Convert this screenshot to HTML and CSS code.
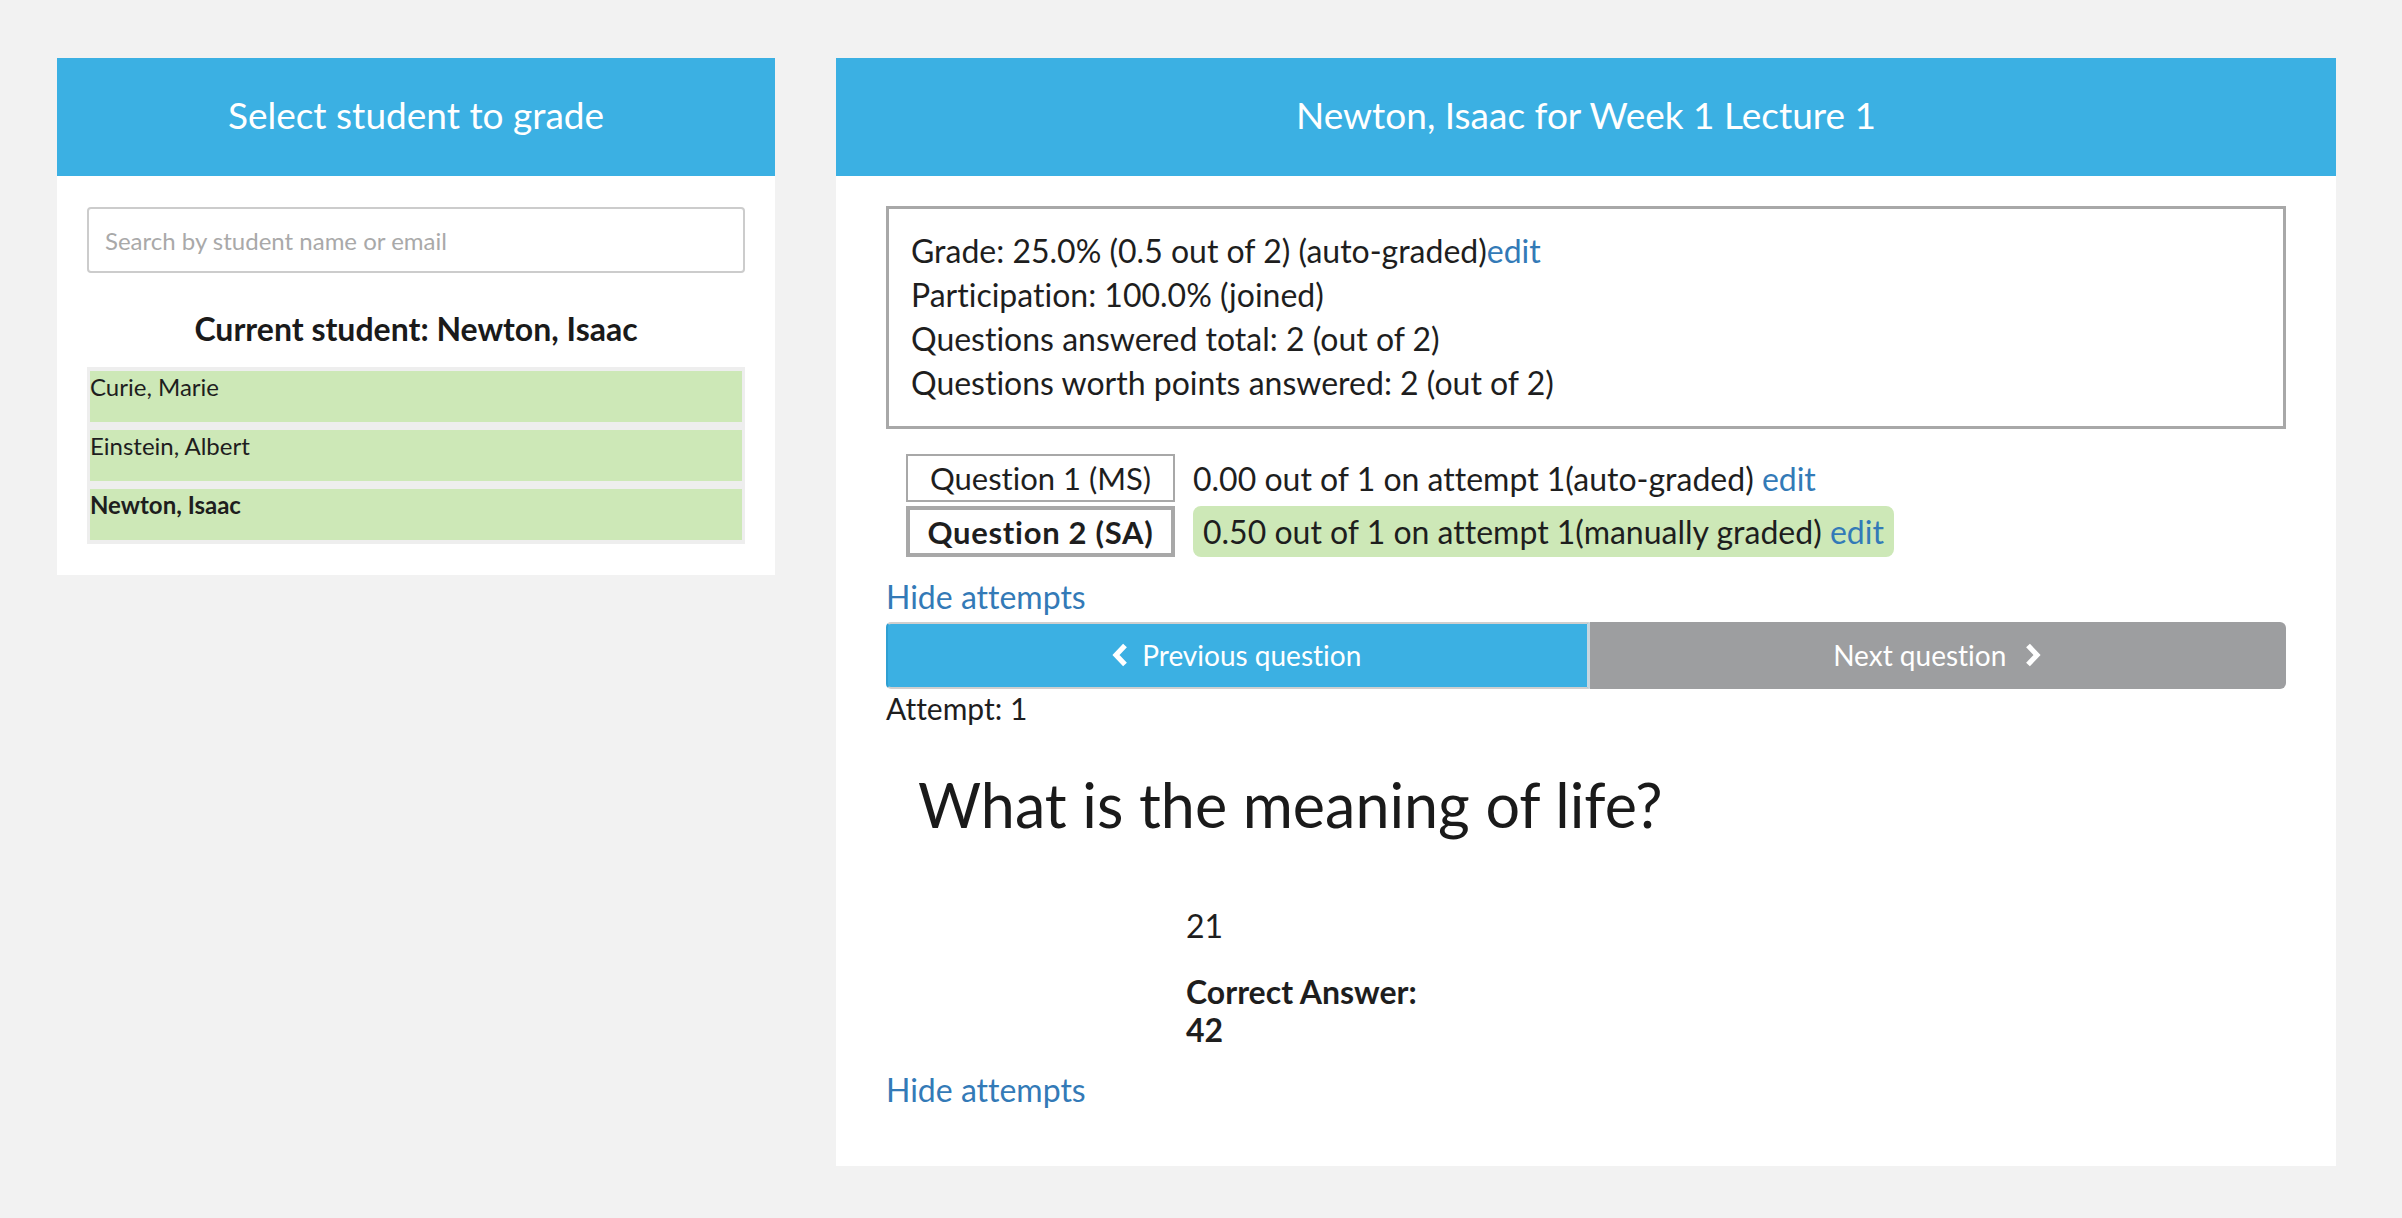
FILE: index.html
```html
<!DOCTYPE html>
<html lang="en">
<head>
<meta charset="utf-8">
<title>Grading</title>
<link rel="stylesheet" href="styles.css">
</head>
<body>
<div class="page">
  <aside class="panel student-panel">
    <div class="panel-header"><h2>Select student to grade</h2></div>
    <div class="panel-body student-body">
      <input class="search" type="text" placeholder="Search by student name or email">
      <h3 class="current">Current student: Newton, Isaac</h3>
      <ul class="student-list">
        <li>Curie, Marie</li>
        <li>Einstein, Albert</li>
        <li class="active">Newton, Isaac</li>
      </ul>
    </div>
  </aside>

  <main class="panel grade-panel">
    <div class="panel-header"><h2>Newton, Isaac for Week 1 Lecture 1</h2></div>
    <div class="panel-body grade-body">
      <div class="summary">
        <div>Grade: 25.0% (0.5 out of 2) (auto-graded)<a href="#">edit</a></div>
        <div>Participation: 100.0% (joined)</div>
        <div>Questions answered total: 2 (out of 2)</div>
        <div>Questions worth points answered: 2 (out of 2)</div>
      </div>

      <div class="questions">
        <div class="qbox">Question 1 (MS)</div>
        <div class="score">0.00 out of 1 on attempt 1(auto-graded)&nbsp;<a href="#">edit</a></div>
        <div class="qbox selected">Question 2 (SA)</div>
        <div class="score graded">0.50 out of 1 on attempt 1(manually graded)&nbsp;<a href="#">edit</a></div>
      </div>

      <a class="hide-link first" href="#">Hide attempts</a>

      <div class="nav">
        <button class="nav-btn prev" type="button">
          <svg class="chev" width="17" height="24" viewBox="0 0 17 24"><polyline points="14,2.5 5,12 14,21.5" fill="none" stroke="#fff" stroke-width="5.2"/></svg>
          <span>Previous question</span>
        </button>
        <button class="nav-btn next" type="button">
          <span>Next question</span>
          <svg class="chev" width="17" height="24" viewBox="0 0 17 24"><polyline points="3,2.5 12,12 3,21.5" fill="none" stroke="#fff" stroke-width="5.2"/></svg>
        </button>
      </div>

      <div class="attempt">Attempt: 1</div>

      <h1 class="question">What is the meaning of life?</h1>

      <div class="answer">
        <div class="given">21</div>
        <div class="correct">Correct Answer:<br>42</div>
      </div>

      <a class="hide-link last" href="#">Hide attempts</a>
    </div>
  </main>
</div>
</body>
</html>
```

FILE: styles.css
```css
* { box-sizing: border-box; }

html, body {
  margin: 0;
  padding: 0;
  background: #f2f2f2;
  font-family: Lato, "Open Sans", "Liberation Sans", sans-serif;
  font-variant-ligatures: none;
  color: #1e1e1e;
}

button, input {
  font-variant-ligatures: none;
}

.page {
  display: flex;
  align-items: flex-start;
  gap: 61px;
  padding: 58px 0 0 57px;
}

.panel {
  background: #fff;
}

.student-panel { width: 718px; }
.grade-panel { width: 1500px; }

.panel-header {
  height: 118px;
  background: #3bb0e3;
  display: flex;
  align-items: center;
  justify-content: center;
  padding-bottom: 4px;
}

.panel-header h2 {
  margin: 0;
  color: #fff;
  font-size: 37px;
  font-weight: 400;
  line-height: 1.2;
}

/* left panel */
.student-body {
  padding: 31px 30px 31px;
  display: flex;
  flex-direction: column;
}

.search {
  height: 66px;
  width: 100%;
  border: 2px solid #cccccc;
  border-radius: 4px;
  padding: 0 16px;
  font-family: inherit;
  font-size: 24px;
  color: #333;
  outline: none;
}

.search::placeholder { color: #a9a9a9; }

.current {
  margin: 39px 0 21px;
  text-align: center;
  font-size: 32px;
  font-weight: 700;
  line-height: 34px;
  color: #1a1a1a;
}

.student-list {
  list-style: none;
  margin: 0;
  padding: 4px 3px;
  background: #eeeeee;
  display: flex;
  flex-direction: column;
  gap: 8px;
}

.student-list li {
  height: 51px;
  background: #cde8b7;
  font-size: 24px;
  line-height: 1.2;
  padding-top: 2px;
  color: #1e1e1e;
}

.student-list li.active { font-weight: 700; }

/* right panel */
.grade-body {
  padding: 30px 50px 53px;
  display: flex;
  flex-direction: column;
  align-items: flex-start;
}

.summary {
  width: 100%;
  border: 3px solid #a8a8a8;
  padding: 20px 22px 21px;
  font-size: 32px;
  line-height: 44px;
}

a {
  color: #337ab7;
  text-decoration: none;
}

.questions {
  margin: 25px 0 0 20px;
  display: grid;
  grid-template-columns: 269px auto;
  grid-template-rows: 48px 51px;
  column-gap: 18px;
  row-gap: 4px;
}

.qbox {
  border: 2px solid #a8a8a8;
  display: flex;
  align-items: center;
  justify-content: center;
  font-size: 31px;
  white-space: nowrap;
}

.qbox.selected {
  border-width: 4px;
  font-weight: 700;
  letter-spacing: 0.7px;
}

.score {
  display: flex;
  align-items: center;
  font-size: 32px;
  white-space: nowrap;
}

.score.graded {
  background: #cde8b7;
  border-radius: 8px;
  padding: 0 10px;
}

.hide-link {
  font-size: 32px;
  line-height: 1.4;
}

.hide-link.first { margin-top: 18px; }
.hide-link.last { margin-top: 19px; }

.nav {
  margin-top: 2px;
  width: 100%;
  display: flex;
  height: 67px;
}

.nav-btn {
  flex: 1;
  display: flex;
  align-items: center;
  justify-content: center;
  color: #fff;
  font-family: inherit;
  font-size: 28px;
  padding: 0;
  cursor: pointer;
}

.nav-btn.prev {
  background: #3bb0e3;
  border: 2px solid #cfcfcf;
  border-left-color: #2f9fd2;
  border-right: 3px solid #c7d6df;
  border-radius: 5px 0 0 5px;
  gap: 14px;
  padding-right: 2px;
}

.nav-btn.next {
  background: #9d9ea0;
  border: none;
  border-radius: 0 6px 6px 0;
  gap: 19px;
}

.chev { display: block; }

.attempt {
  margin-top: 1px;
  font-size: 30px;
  line-height: 36px;
}

.question {
  margin: 42px 0 0;
  padding-left: 32px;
  font-size: 61px;
  font-weight: 400;
  line-height: 1.2;
  color: #1a1a1a;
}

.answer {
  margin-left: 300px;
  font-size: 32px;
  line-height: 38px;
}

.given { margin-top: 66px; }

.correct {
  margin-top: 28px;
  font-weight: 700;
}
```
